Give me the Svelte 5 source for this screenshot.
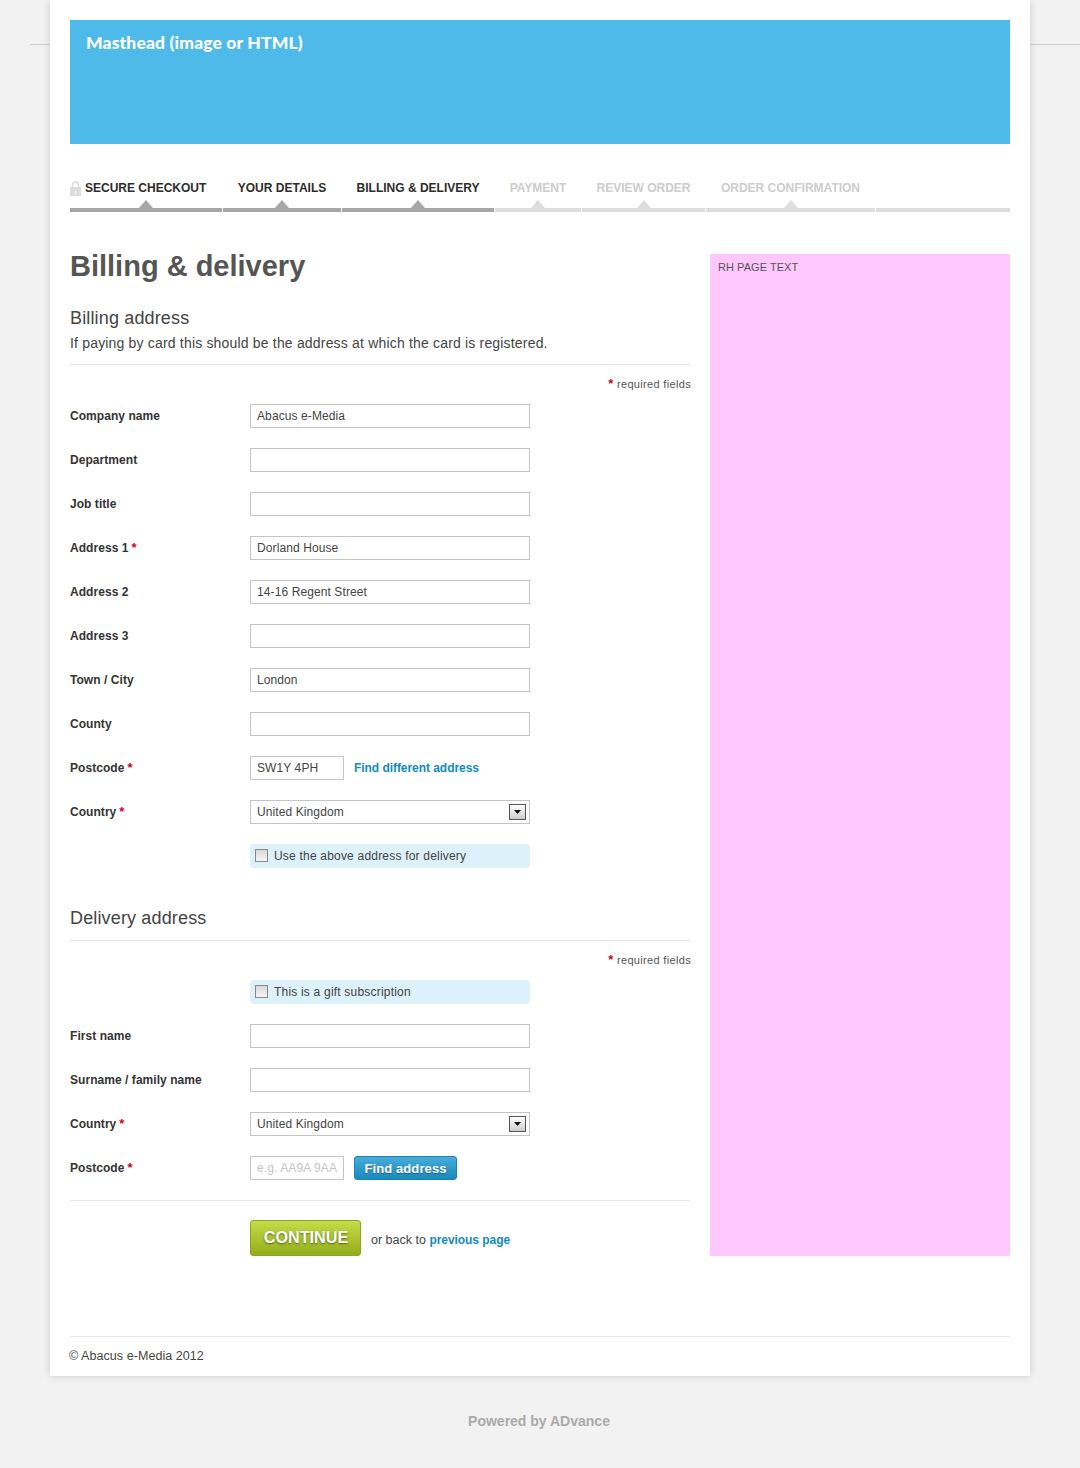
<script>
  const steps = [
    { label: 'SECURE CHECKOUT', width: 152, done: true, lock: true },
    { label: 'YOUR DETAILS', width: 118, done: true },
    { label: 'BILLING & DELIVERY', width: 152, done: true },
    { label: 'PAYMENT', width: 86 },
    { label: 'REVIEW ORDER', width: 123 },
    { label: 'ORDER CONFIRMATION', width: 169 }
  ];

  const billing = [
    { label: 'Company name', value: 'Abacus e-Media' },
    { label: 'Department' },
    { label: 'Job title' },
    { label: 'Address 1', required: true, value: 'Dorland House' },
    { label: 'Address 2', value: '14-16 Regent Street' },
    { label: 'Address 3' },
    { label: 'Town / City', value: 'London' },
    { label: 'County' }
  ];
</script>

<div class="page">
  <span class="rule rule-left"></span>
  <span class="rule rule-right"></span>

  <div class="wrap">
    <header class="masthead">Masthead (image or HTML)</header>

    <nav class="steps">
      {#each steps as step}
        <div class="step" class:done={step.done} class:first={step.lock} style="width: {step.width}px">
          <span class="step-label">
            {#if step.lock}
              <svg class="lock" width="11" height="15" viewBox="0 0 11 15">
                <path d="M2.500 7V4a3 3 0 0 1 6 0v3" fill="none" stroke="#ddd" stroke-width="1.600" />
                <rect y="6" width="11" height="9" fill="#ddd" />
                <rect x="5" y="10" width="1.200" height="2.500" fill="#fff" />
              </svg>
            {/if}
            <span>{step.label}</span>
          </span>
          <span class="step-arrow"></span>
        </div>
      {/each}
      <div class="step step-last"></div>
    </nav>

    <div class="columns">
      <main class="content">
        <h1>Billing &amp; delivery</h1>

        <h2>Billing address</h2>
        <p class="intro">If paying by card this should be the address at which the card is registered.</p>
        <div class="required-note"><span class="star">*</span> required fields</div>

        <div class="rows">
          {#each billing as row}
            <div class="row">
              <span class="field-label">{row.label}{#if row.required}<span class="star">*</span>{/if}</span>
              <input class="input" type="text" value={row.value ?? ''} />
            </div>
          {/each}

          <div class="row">
            <span class="field-label">Postcode<span class="star">*</span></span>
            <input class="input short" type="text" value="SW1Y 4PH" />
            <a class="link find-link" href="#top">Find different address</a>
          </div>

          <div class="row">
            <span class="field-label">Country<span class="star">*</span></span>
            {@render selectBox()}
          </div>

          <div class="row">
            <span class="field-label"></span>
            <label class="check-box">
              <input type="checkbox" />
              Use the above address for delivery
            </label>
          </div>
        </div>

        <h2 class="delivery-title">Delivery address</h2>
        <div class="required-note"><span class="star">*</span> required fields</div>

        <div class="rows">
          <div class="row">
            <span class="field-label"></span>
            <label class="check-box">
              <input type="checkbox" />
              This is a gift subscription
            </label>
          </div>

          <div class="row">
            <span class="field-label">First name</span>
            <input class="input" type="text" />
          </div>

          <div class="row">
            <span class="field-label">Surname / family name</span>
            <input class="input" type="text" />
          </div>

          <div class="row">
            <span class="field-label">Country<span class="star">*</span></span>
            {@render selectBox()}
          </div>

          <div class="row">
            <span class="field-label">Postcode<span class="star">*</span></span>
            <input class="input short" type="text" placeholder="e.g. AA9A 9AA" />
            <button class="btn-find" type="button">Find address</button>
          </div>
        </div>

        <div class="actions">
          <button class="btn-continue" type="button">CONTINUE</button>
          <span class="back">or back to <a class="link" href="#top">previous page</a></span>
        </div>
      </main>

      <aside class="side">RH PAGE TEXT</aside>
    </div>

    <footer class="footer">© Abacus e-Media 2012</footer>
  </div>

  <div class="powered">Powered by ADvance</div>
</div>

{#snippet selectBox()}
  <div class="input select">
    United Kingdom
    <span class="select-btn">
      <svg width="7" height="4" viewBox="0 0 7 4"><path d="M0 0h7L3.500 4z" fill="#111" /></svg>
    </span>
  </div>
{/snippet}

<style>
  :global(body) {
    background: #f2f2f2;
    font-family: "Liberation Sans", Arial, sans-serif;
    color: #444;
  }

  .page {
    position: relative;
    height: 1468px;
    overflow: hidden;
  }

  /* thin lines either side of the sheet */
  .rule {
    position: absolute;
    top: 44px;
    height: 1px;
    background: #ccc;
  }

  .rule-left {
    left: 30px;
    width: 20px;
  }

  .rule-right {
    left: 1030px;
    right: 0;
  }

  .wrap {
    position: relative;
    box-sizing: border-box;
    width: 980px;
    height: 1376px;
    margin-left: 50px;
    padding: 20px 20px 0;
    background: #fff;
    box-shadow: 0 0 8px rgba(0, 0, 0, 0.16);
  }

  .masthead {
    box-sizing: border-box;
    height: 124px;
    padding: 12px 16px;
    background: #4ebaea;
    color: #fff;
    font-family: Lato, sans-serif;
    font-size: 17.500px;
    font-weight: 900;
    letter-spacing: 0.15px;
    line-height: 22px;
  }

  .steps {
    display: flex;
    gap: 1px;
    margin-top: 36px;
  }

  .step {
    position: relative;
    box-sizing: border-box;
    flex: none;
    height: 32px;
    border-bottom: 4px solid #ddd;
    color: #ccc;
    font-size: 12px;
    font-weight: 700;
    line-height: 16px;
  }

  .step.done {
    border-bottom-color: #a6a6a6;
    color: #2c2c2c;
  }

  .step-last {
    flex: 1;
  }

  .step-label {
    display: flex;
    align-items: center;
    justify-content: center;
    gap: 4px;
    white-space: nowrap;
  }

  .first .step-label {
    justify-content: flex-start;
  }

  .step-arrow {
    position: absolute;
    left: 50%;
    bottom: 0;
    margin-left: -7px;
    border: solid transparent;
    border-width: 0 7px 8px;
    border-bottom-color: #ddd;
  }

  .done .step-arrow {
    border-bottom-color: #a6a6a6;
  }

  .columns {
    display: flex;
    gap: 20px;
    margin-top: 42px;
  }

  .content {
    width: 620px;
  }

  h1 {
    margin: 0;
    color: #555;
    font-size: 29px;
    font-weight: 700;
    line-height: 24px;
  }

  h2 {
    margin: 28px 0 0;
    color: #444;
    font-size: 18px;
    font-weight: 400;
    letter-spacing: 0.15px;
    line-height: 24px;
  }

  .intro {
    margin: 3px 0 0;
    padding-bottom: 11px;
    border-bottom: 1px solid #e5e5e5;
    font-size: 14px;
    letter-spacing: 0.18px;
    line-height: 20px;
  }

  .delivery-title {
    margin-top: 38px;
    padding-bottom: 10px;
    border-bottom: 1px solid #e5e5e5;
  }

  .required-note {
    margin-top: 11px;
    margin-right: -1px;
    color: #555;
    font-size: 11px;
    letter-spacing: 0.33px;
    line-height: 16px;
    text-align: right;
  }

  .star {
    color: #d0021b;
    font-size: 13px;
    font-weight: 700;
    line-height: 0;
  }

  .field-label .star {
    margin-left: 3px;
  }

  .rows {
    display: flex;
    flex-direction: column;
    gap: 20px;
    margin-top: 12px;
  }

  .row {
    display: flex;
    align-items: center;
    height: 24px;
  }

  .field-label {
    flex: none;
    width: 180px;
    color: #333;
    font-size: 12px;
    font-weight: 700;
    letter-spacing: 0.05px;
  }

  .input {
    box-sizing: border-box;
    width: 280px;
    height: 24px;
    margin: 0;
    padding: 0 6px;
    border: 1px solid #c4c4c4;
    border-radius: 0;
    outline: none;
    background: #fff;
    color: #444;
    font-family: inherit;
    font-size: 12px;
    letter-spacing: 0.1px;
  }

  .input::placeholder {
    color: #c4c4c4;
    opacity: 1;
  }

  .short {
    width: 94px;
    padding-right: 2px;
  }

  .select {
    display: flex;
    align-items: center;
    justify-content: space-between;
    padding-right: 3px;
  }

  .select-btn {
    display: flex;
    align-items: center;
    justify-content: center;
    box-sizing: border-box;
    width: 17px;
    height: 16px;
    border: 1px solid #555;
    background: linear-gradient(#fff, #ccc);
  }

  .check-box {
    display: flex;
    align-items: center;
    gap: 6px;
    box-sizing: border-box;
    width: 280px;
    height: 24px;
    padding-left: 5px;
    border-radius: 4px;
    background: #dcf1f9;
    font-size: 12px;
    letter-spacing: 0.2px;
  }

  .check-box input {
    appearance: none;
    box-sizing: border-box;
    width: 13px;
    height: 13px;
    margin: -2px 0 0;
    border: 1px solid #888;
    background: linear-gradient(#d8d8d8, #f4f4f4);
  }

  .link {
    color: #0f8cc0;
    font-size: 12px;
    font-weight: 700;
    letter-spacing: -0.05px;
    text-decoration: none;
  }

  .find-link {
    margin-left: 10px;
  }

  .btn-find {
    box-sizing: border-box;
    width: 103px;
    height: 24px;
    margin-left: 10px;
    padding: 0;
    border: 1px solid #1a85b5;
    border-radius: 3px;
    background: linear-gradient(#46acdb, #1b88bb);
    color: #fff;
    font-family: inherit;
    font-size: 13px;
    font-weight: 700;
    letter-spacing: 0.1px;
    text-shadow: 0 1px 1px rgba(0, 0, 0, 0.35);
  }

  .actions {
    display: flex;
    align-items: center;
    margin-top: 20px;
    padding: 19px 0 0 180px;
    border-top: 1px solid #e5e5e5;
  }

  .btn-continue {
    box-sizing: border-box;
    width: 111px;
    height: 36px;
    padding: 0 0 1px 1px;
    border: 1px solid #8ba51f;
    border-radius: 3px;
    background: linear-gradient(#c5dc47, #93ad1c);
    color: #fff;
    font-family: inherit;
    font-size: 16.200px;
    font-weight: 700;
    text-shadow: 0 1px 2px rgba(0, 0, 0, 0.5);
  }

  .back {
    margin: 4px 0 0 10px;
    font-size: 12.500px;
  }

  .side {
    box-sizing: border-box;
    width: 300px;
    height: 1002px;
    padding: 6px 8px;
    background: #fec8fe;
    color: #555;
    font-size: 11px;
    letter-spacing: 0.05px;
    line-height: 15px;
  }

  .footer {
    margin-top: 80px;
    padding-top: 11px;
    border-top: 1px solid #e5e5e5;
    font-size: 12.500px;
    letter-spacing: 0.06px;
    line-height: 17px;
    text-indent: -1px;
  }

  .powered {
    width: 1078px;
    margin-top: 36px;
    color: #aaa;
    font-size: 14px;
    font-weight: 700;
    line-height: 18px;
    text-align: center;
  }
</style>
